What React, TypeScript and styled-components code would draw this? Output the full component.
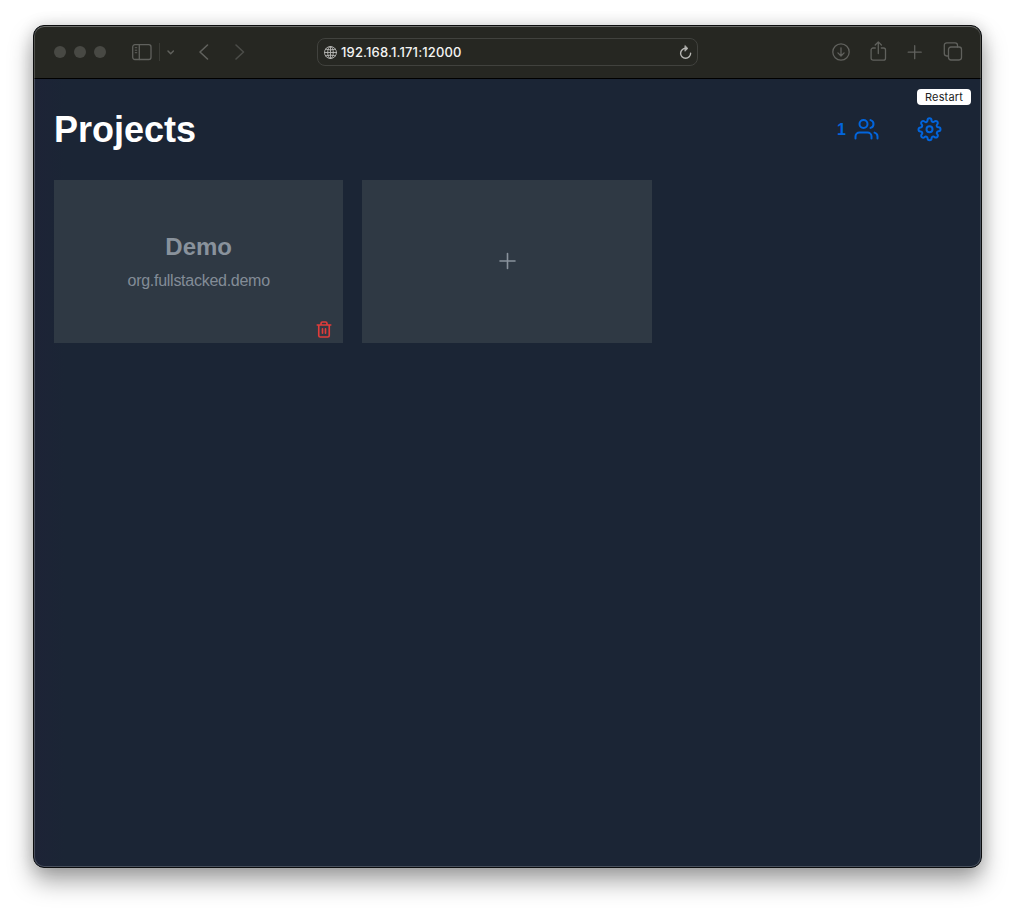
import React from "react";
import styled, { createGlobalStyle } from "styled-components";

const GlobalStyle = createGlobalStyle`
  *, *::before, *::after { box-sizing: border-box; }
  body { margin: 0; background: #fff; font-family: "Liberation Sans", Arial, sans-serif; }
  h1, h2, p { margin: 0; }
  button { border: 0; padding: 0; background: none; color: inherit; font: inherit; }
  svg { display: block; flex: none; overflow: visible; }
`;

const Desktop = styled.main`
  height: 909px;
  padding: 25px 33px 41px;
  overflow: hidden;
`;

const Window = styled.div`
  position: relative;
  display: flex;
  flex-direction: column;
  height: 843px;
  border: 1px solid #0c0d0e;
  border-radius: 11px;
  overflow: hidden;
  background: #1b2535;
`;

const Shadow = styled.div`
  border-radius: 11px;
  box-shadow: 0 13px 24px rgba(0, 0, 0, 0.36), 0 0 16px rgba(0, 0, 0, 0.14);
`;

const Rim = styled.div`
  position: absolute;
  inset: 0;
  border: 1px solid rgba(255, 255, 255, 0.2);
  border-top-color: rgba(255, 255, 255, 0.32);
  border-radius: 10px;
  pointer-events: none;
`;

const Toolbar = styled.header`
  display: flex;
  align-items: center;
  height: 53px;
  padding: 0 18px 0 20px;
  background: #262722;
  border-bottom: 1px solid #000;
  color: #60615d;
`;

const TrafficLights = styled.div`
  display: flex;
  gap: 8px;
`;

const Light = styled.span`
  width: 12px;
  height: 12px;
  border-radius: 50%;
  background: #484944;
`;

const ToolGroup = styled.div<{ $gap: number; $start: number }>`
  display: flex;
  align-items: center;
  gap: ${(p) => p.$gap}px;
  margin-left: ${(p) => p.$start}px;
`;

const Divider = styled.span`
  width: 1px;
  height: 18px;
  background: #3a3b36;
`;

const ToolButton = styled.button<{ $dim?: boolean }>`
  color: ${(p) => (p.$dim ? "#4b4c48" : "inherit")};
`;

const AddressBar = styled.div`
  display: flex;
  align-items: center;
  width: 381px;
  height: 28px;
  margin-left: 72px;
  padding: 0 5px 0 6px;
  border: 1px solid #41423e;
  border-radius: 8px;
  color: #b8b8b5;
`;

const Address = styled.span`
  flex: 1;
  margin-left: 4px;
  color: #f4f4f2;
  font: 500 13px/16px Inter, sans-serif;
  letter-spacing: 0.16px;
`;

const Page = styled.section`
  flex: 1;
  padding: 27px 20px 20px;
  background: linear-gradient(90deg, #1d2336 0, #1b2535 30px);
`;

const PageHeader = styled.div`
  display: flex;
  align-items: center;
  justify-content: space-between;
  height: 48px;
  padding-right: 20px;
`;

const Title = styled.h1`
  color: #fff;
  font-size: 36px;
  line-height: 48px;
`;

const Actions = styled.div`
  display: flex;
  align-items: center;
  gap: 39px;
  padding-bottom: 2px;
  color: #0265dd;
`;

const Peers = styled.button`
  display: flex;
  align-items: center;
  gap: 8px;
  font-size: 16px;
  font-weight: 700;
`;

const PeerCount = styled.span`
  padding-top: 2px;
`;

const Grid = styled.div`
  display: grid;
  grid-template-columns: repeat(3, 289.3px);
  gap: 19px;
  margin-top: 26px;
`;

const Card = styled.article`
  position: relative;
  display: flex;
  flex-direction: column;
  align-items: center;
  justify-content: center;
  height: 163px;
  background: #2f3944;
  color: #89929c;
`;

const ProjectName = styled.h2`
  font-size: 24px;
  line-height: 28px;
`;

const ProjectId = styled.p`
  margin-top: 10px;
  font-size: 16px;
  line-height: 20px;
  letter-spacing: -0.27px;
  color: #838c97;
`;

const DeleteButton = styled.button`
  position: absolute;
  right: 10px;
  bottom: 5px;
  color: #e03c3a;
`;

const Tooltip = styled.div`
  position: absolute;
  top: 63px;
  right: 10px;
  width: 54px;
  height: 16px;
  border-radius: 4px;
  background: #fff;
  color: #222;
  font: 400 11px/16px Inter, sans-serif;
  letter-spacing: 0.15px;
  text-align: center;
`;

type IconProps = {
  w: number;
  h: number;
  box?: string;
  stroke?: number;
  children: React.ReactNode;
};

const Icon = ({ w, h, box, stroke = 1.3, children }: IconProps) => (
  <svg
    width={w}
    height={h}
    viewBox={box ?? `0 0 ${w} ${h}`}
    fill="none"
    stroke="currentColor"
    strokeWidth={stroke}
    strokeLinecap="round"
    strokeLinejoin="round"
  >
    {children}
  </svg>
);

const SidebarIcon = () => (
  <Icon w={20} h={16}>
    <rect x="0.7" y="0.7" width="18.3" height="14.8" rx="2.2" />
    <path d="M7.3 0.7v14.8" />
    <path d="M3.2 3.7h1.6M3.2 6.2h1.6M3.2 8.7h1.6" strokeWidth="1" />
  </Icon>
);

const GlobeIcon = () => (
  <Icon w={13} h={13} stroke={0.9}>
    <circle cx="6.5" cy="6.5" r="6" />
    <ellipse cx="6.5" cy="6.5" rx="2.8" ry="6" />
    <path d="M6.5 0.5v12M0.5 6.5h12M1.5 3.2q5 1.5 10 0M1.5 9.8q5-1.5 10 0" />
  </Icon>
);

const ReloadIcon = () => (
  <Icon w={13} h={15} stroke={1.4}>
    <path d="M6.8 3.3A5 5 0 1 0 11.6 8.2" />
    <path d="M6.2 0.8L8.9 3.4L6.2 6Z" fill="currentColor" strokeWidth="0.8" />
  </Icon>
);

const DownloadIcon = () => (
  <Icon w={18} h={18}>
    <circle cx="9" cy="9" r="8.2" />
    <path d="M9 4.8v8M5.9 9.9L9 13l3.1-3.1" />
  </Icon>
);

const ShareIcon = () => (
  <Icon w={16} h={22} box="0.7 0 16 22">
    <path d="M5 7H2.8A2 2 0 0 0 .8 9v8.2a2 2 0 0 0 2 2h10.4a2 2 0 0 0 2-2V9a2 2 0 0 0-2-2H11" />
    <path d="M8 12.5V1M4.9 4L8 .9L11.1 4" />
  </Icon>
);

const CopyIcon = () => (
  <Icon w={19} h={20} box="0.5 0 19 20">
    <rect x="5" y="5" width="13" height="13" rx="2.4" />
    <path d="M5 14H3.2A2.4 2.4 0 0 1 .8 11.6V3.2A2.4 2.4 0 0 1 3.2.8h8.4A2.4 2.4 0 0 1 14 3.2V5" />
  </Icon>
);

const UsersIcon = () => (
  <Icon w={24} h={24} box="-0.5 0 24 24" stroke={2}>
    <path d="M17 21.4v-1.9a4 4 0 0 0-4-4H5a4 4 0 0 0-4 4v1.9" />
    <circle cx="9" cy="7" r="4" />
    <path d="M23 21.4v-1.9a4 4 0 0 0-3-3.87M16 3.13a4 4 0 0 1 0 7.75" />
  </Icon>
);

const SettingsIcon = () => (
  <Icon w={24} h={24} box="-0.5 -0.3 24 24" stroke={2}>
    <circle cx="12" cy="12" r="3" />
    <path d="M19.4 15a1.65 1.65 0 0 0 .33 1.82l.06.06a2 2 0 0 1 0 2.83 2 2 0 0 1-2.83 0l-.06-.06a1.65 1.65 0 0 0-1.82-.33 1.65 1.65 0 0 0-1 1.51V21a2 2 0 0 1-2 2 2 2 0 0 1-2-2v-.09A1.65 1.65 0 0 0 9 19.4a1.65 1.65 0 0 0-1.82.33l-.06.06a2 2 0 0 1-2.83 0 2 2 0 0 1 0-2.83l.06-.06a1.65 1.65 0 0 0 .33-1.82 1.65 1.65 0 0 0-1.51-1H3a2 2 0 0 1-2-2 2 2 0 0 1 2-2h.09A1.65 1.65 0 0 0 4.6 9a1.65 1.65 0 0 0-.33-1.82l-.06-.06a2 2 0 0 1 0-2.83 2 2 0 0 1 2.83 0l.06.06a1.65 1.65 0 0 0 1.82.33H9a1.65 1.65 0 0 0 1-1.51V3a2 2 0 0 1 2-2 2 2 0 0 1 2 2v.09a1.65 1.65 0 0 0 1 1.51 1.65 1.65 0 0 0 1.82-.33l.06-.06a2 2 0 0 1 2.83 0 2 2 0 0 1 0 2.83l-.06.06a1.65 1.65 0 0 0-.33 1.82V9a1.65 1.65 0 0 0 1.51 1H21a2 2 0 0 1 2 2 2 2 0 0 1-2 2h-.09a1.65 1.65 0 0 0-1.51 1z" />
  </Icon>
);

const TrashIcon = () => (
  <Icon w={18} h={18} box="0 -0.6 24 24" stroke={2.2}>
    <path d="M3 6h18M19 6v14a2 2 0 0 1-2 2H7a2 2 0 0 1-2-2V6M8 6V4a2 2 0 0 1 2-2h4a2 2 0 0 1 2 2v2M10 11v6M14 11v6" />
  </Icon>
);

const AddIcon = () => (
  <Icon w={18} h={20} stroke={1.6}>
    <path d="M9.5 1.5v15M2 9h15" />
  </Icon>
);

export default function App() {
  return (
    <Desktop>
      <GlobalStyle />
      <Shadow>
        <Window>
          <Toolbar>
            <TrafficLights>
              <Light />
              <Light />
              <Light />
            </TrafficLights>
            <ToolGroup $gap={7} $start={26}>
              <ToolButton aria-label="Sidebar"><SidebarIcon /></ToolButton>
              <Divider />
              <ToolButton aria-label="Tab groups">
                <Icon w={8} h={5} stroke={1.5}><path d="M1 1L3.7 3.7L6.4 1" /></Icon>
              </ToolButton>
            </ToolGroup>
            <ToolGroup $gap={26} $start={24}>
              <ToolButton aria-label="Back">
                <Icon w={10} h={16} stroke={1.6}><path d="M8.5 1L1 8L8.5 15" /></Icon>
              </ToolButton>
              <ToolButton aria-label="Forward" $dim>
                <Icon w={10} h={16} stroke={1.6}><path d="M1 1L8.5 8L1 15" /></Icon>
              </ToolButton>
            </ToolGroup>
            <AddressBar>
              <GlobeIcon />
              <Address>192.168.1.171:12000</Address>
              <ReloadIcon />
            </AddressBar>
            <ToolGroup $gap={21} $start={134}>
              <ToolButton aria-label="Downloads"><DownloadIcon /></ToolButton>
              <ToolButton aria-label="Share"><ShareIcon /></ToolButton>
              <ToolButton aria-label="New tab">
                <Icon w={15} h={15} box="0.8 0.3 15 15"><path d="M7.5 1v13M1 7.5h13" /></Icon>
              </ToolButton>
              <ToolButton aria-label="Tabs"><CopyIcon /></ToolButton>
            </ToolGroup>
          </Toolbar>
          <Page>
            <PageHeader>
              <Title>Projects</Title>
              <Actions>
                <Peers aria-label="Peers"><PeerCount>1</PeerCount><UsersIcon /></Peers>
                <ToolButton aria-label="Settings"><SettingsIcon /></ToolButton>
              </Actions>
            </PageHeader>
            <Grid>
              <Card>
                <ProjectName>Demo</ProjectName>
                <ProjectId>org.fullstacked.demo</ProjectId>
                <DeleteButton aria-label="Delete"><TrashIcon /></DeleteButton>
              </Card>
              <Card>
                <AddIcon />
              </Card>
            </Grid>
          </Page>
          <Tooltip>Restart</Tooltip>
          <Rim />
        </Window>
      </Shadow>
    </Desktop>
  );
}
